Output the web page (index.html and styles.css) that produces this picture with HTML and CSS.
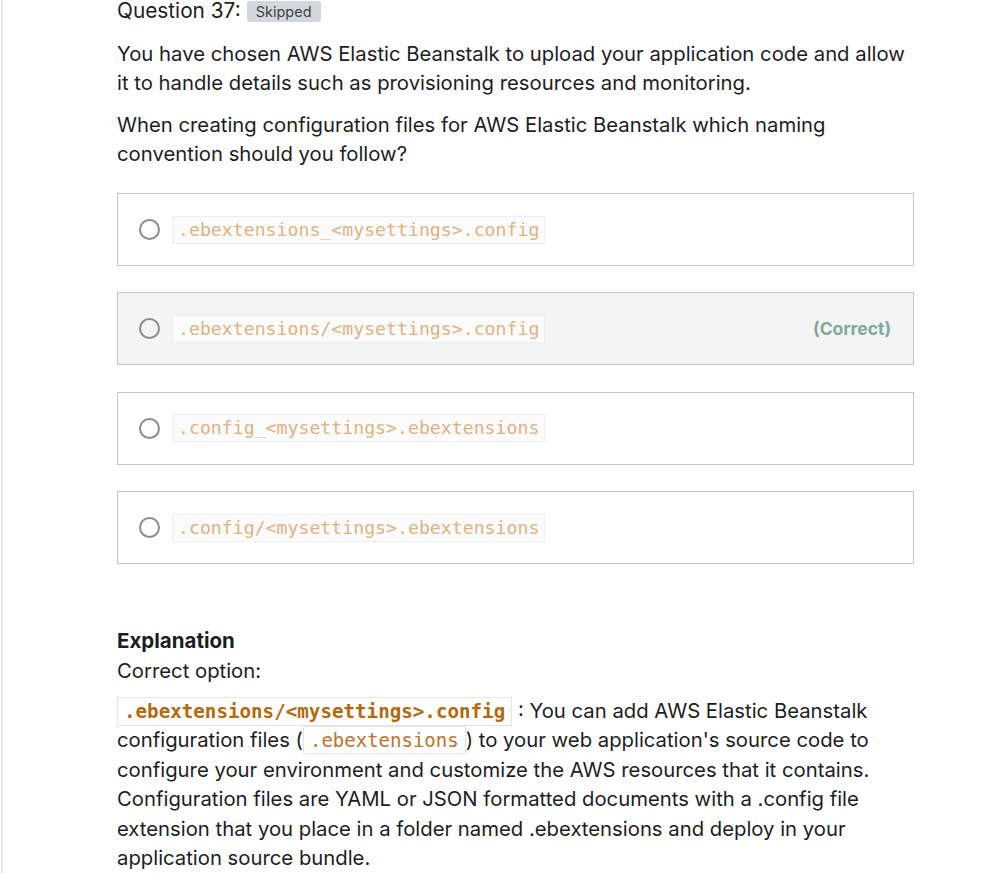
FILE: index.html
```html
<!DOCTYPE html>
<html lang="en">
<head>
<meta charset="utf-8">
<title>Question 37</title>
<link rel="stylesheet" href="styles.css">
</head>
<body>
<div class="page">
  <div class="content">
    <div class="q-head">
      <span class="q-title">Question 37:</span>
      <span class="badge">Skipped</span>
    </div>
    <p class="q-text">You have chosen AWS Elastic Beanstalk to upload your application code and allow it to handle details such as provisioning resources and monitoring.</p>
    <p class="q-text">When creating configuration files for AWS Elastic Beanstalk which naming convention should you follow?</p>

    <div class="options">
      <div class="option">
        <span class="radio"></span>
        <code class="opt-code">.ebextensions_&lt;mysettings&gt;.config</code>
      </div>
      <div class="option correct">
        <span class="radio"></span>
        <code class="opt-code">.ebextensions/&lt;mysettings&gt;.config</code>
        <span class="correct-label">(Correct)</span>
      </div>
      <div class="option">
        <span class="radio"></span>
        <code class="opt-code">.config_&lt;mysettings&gt;.ebextensions</code>
      </div>
      <div class="option">
        <span class="radio"></span>
        <code class="opt-code">.config/&lt;mysettings&gt;.ebextensions</code>
      </div>
    </div>

    <div class="explanation">
      <h3 class="exp-title">Explanation</h3>
      <p class="exp-sub">Correct option:</p>
      <p class="exp-text"><code class="code-strong">.ebextensions/&lt;mysettings&gt;.config</code> : You can add AWS Elastic Beanstalk configuration files (<code class="code-inline">.ebextensions</code>) to your web application's source code to configure your environment and customize the AWS resources that it contains. Configuration files are YAML or JSON formatted documents with a .config file extension that you place in a folder named .ebextensions and deploy in your application source bundle.</p>
    </div>
  </div>
</div>
</body>
</html>
```

FILE: styles.css
```css
html, body {
  margin: 0;
  padding: 0;
  background: #ffffff;
}

body {
  font-family: Inter, "Noto Sans", "Liberation Sans", sans-serif;
  color: #1c1d1f;
  font-size: 20.3px;
  line-height: 29px;
}

.page {
  margin-left: 1px;
  border-left: 2px solid #e6e6e6;
  min-height: 879px;
}

.content {
  padding-left: 114px;
  width: 797px;
  margin-top: -6px;
}

.q-head {
  display: flex;
  align-items: center;
  gap: 6px;
  height: 32px;
}

.q-title {
  font-size: 20.8px;
  color: #1c1d1f;
}

.badge {
  font-size: 14.5px;
  line-height: 21px;
  background: #d1d7dc;
  color: #3e4143;
  padding: 0 9px;
  border-radius: 3px;
  margin-top: 3px;
}

.q-text {
  margin: 13px 0 0 0;
}

.q-text + .q-text {
  margin-top: 13px;
}

.options {
  margin-top: 25px;
  display: flex;
  flex-direction: column;
  gap: 26.4px;
}

.option {
  height: 71px;
  border: 1px solid #c3c6c6;
  display: flex;
  align-items: center;
  padding: 0 22px 0 21px;
  background: #ffffff;
}

.option.correct {
  background: #f2f5f4;
}

.radio {
  width: 17px;
  height: 17px;
  border: 2.5px solid #8c8c8c;
  border-radius: 50%;
  flex: none;
  margin-right: 12px;
}

.opt-code {
  font-family: "DejaVu Sans Mono", "Liberation Mono", monospace;
  font-size: 18.2px;
  line-height: 26px;
  color: #e0b280;
  background: #fbfbfb;
  border: 1px solid #eeeeee;
  padding: 0 5px;
}

.correct-label {
  margin-left: auto;
  font-size: 17.5px;
  font-weight: 700;
  color: #80a99c;
}

.explanation {
  margin-top: 63px;
}

.exp-title {
  margin: 0;
  font-size: 20.5px;
  font-weight: 700;
  line-height: 28.5px;
}

.exp-sub {
  margin: 0;
}

.exp-text {
  margin: 11px 0 0 0;
  line-height: 29.5px;
}

.code-strong {
  font-family: "DejaVu Sans Mono", "Liberation Mono", monospace;
  font-size: 19.2px;
  line-height: 20px;
  font-weight: 700;
  color: #b4690e;
  background: #ffffff;
  border: 1px solid #e4e4e4;
  padding: 2px 6px;
}

.code-inline {
  font-family: "DejaVu Sans Mono", "Liberation Mono", monospace;
  font-size: 19px;
  line-height: 20px;
  color: #c0722a;
  background: #ffffff;
  border: 1px solid #e4e4e4;
  padding: 2px 6px;
}
```
